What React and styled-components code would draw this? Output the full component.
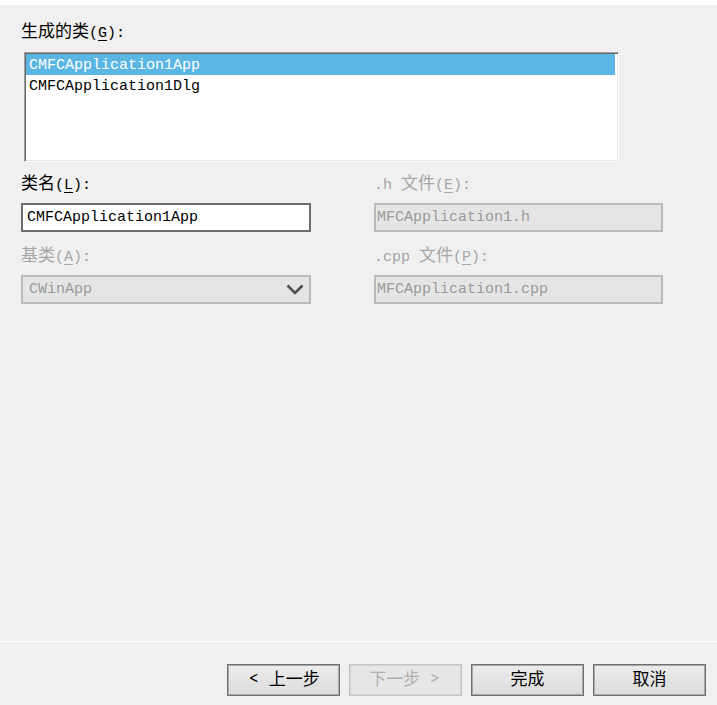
import React from "react";
import styled, { createGlobalStyle } from "styled-components";

const GlobalStyle = createGlobalStyle`
    html, body {
        margin: 0;
        padding: 0;
        background: #f0f0f0;
    }
    * {
        box-sizing: border-box;
    }
`;

const classes = ["CMFCApplication1App", "CMFCApplication1Dlg"];

function Caption({ prefix, text, hotkey, disabled }) {
    return (
        <Label disabled={disabled}>
            {prefix}
            <Han>{text}</Han>(<Key>{hotkey}</Key>):
        </Label>
    );
}

function Chevron() {
    return (
        <svg width="18" height="11" viewBox="0 0 18 11">
            <polyline points="1.5,1.5 9,9 16.5,1.5" fill="none" stroke="#505050" strokeWidth="2.6" />
        </svg>
    );
}

export default function App() {
    const [selected, setSelected] = React.useState(0);

    return (
        <>
            <GlobalStyle />
            <Page>
                <Content>
                    <Caption text="生成的类" hotkey="G" />
                    <ListBox>
                        {classes.map((name, i) => (
                            <ListItem key={name} selected={i === selected} onClick={() => setSelected(i)}>
                                {name}
                            </ListItem>
                        ))}
                    </ListBox>
                    <FieldGrid>
                        <Field>
                            <Caption text="类名" hotkey="L" />
                            <TextBox>CMFCApplication1App</TextBox>
                        </Field>
                        <Field>
                            <Caption prefix=".h " text="文件" hotkey="E" disabled />
                            <TextBox disabled>MFCApplication1.h</TextBox>
                        </Field>
                        <Field>
                            <Caption text="基类" hotkey="A" disabled />
                            <ComboBox>
                                <span>CWinApp</span>
                                <Chevron />
                            </ComboBox>
                        </Field>
                        <Field>
                            <Caption prefix=".cpp " text="文件" hotkey="P" disabled />
                            <TextBox disabled>MFCApplication1.cpp</TextBox>
                        </Field>
                    </FieldGrid>
                </Content>
                <Footer>
                    <Button><Arrow side="left">&lt;</Arrow>上一步</Button>
                    <Button disabled>下一步<Arrow side="right">&gt;</Arrow></Button>
                    <Button>完成</Button>
                    <Button>取消</Button>
                </Footer>
            </Page>
        </>
    );
}

const Page = styled.div`
    width: 717px;
    height: 705px;
    display: flex;
    flex-direction: column;
    background: #f0f0f0;
    border-top: 5px solid #ffffff;
`;

const Content = styled.div`
    display: flex;
    flex-direction: column;
    align-items: flex-start;
    padding: 17px 0 0 21px;
`;

const Label = styled.div`
    height: 22px;
    line-height: 16px;
    font: 400 15px "Liberation Mono", "Noto Sans CJK SC", monospace;
    line-height: 16px;
    color: ${p => (p.disabled ? "#a6a6a6" : "#000000")};
    white-space: pre;
`;

const Han = styled.span`
    font: 400 17px "Noto Sans CJK SC", sans-serif;
    line-height: 16px;
`;

const Key = styled.span`
    text-decoration: underline;
    text-underline-offset: 3px;
`;

const ListBox = styled.div`
    margin: 8px 0 0 3px;
    width: 595px;
    height: 110px;
    padding: 1px 3px 1px 1px;
    background: #ffffff;
    border-top: 1px solid #a0a0a0;
    border-left: 1px solid #a0a0a0;
    border-right: 1px solid #ffffff;
    border-bottom: 1px solid #ffffff;
    box-shadow: inset 1px 1px 0 #696969, inset -1px -1px 0 #e6e6e6;
`;

const ListItem = styled.div`
    height: 21px;
    padding: 2px 0 0 3px;
    line-height: 19px;
    font: 400 15px "Liberation Mono", monospace;
    line-height: 19px;
    color: ${p => (p.selected ? "#ffffff" : "#000000")};
    background: ${p => (p.selected ? "#5cb6e4" : "transparent")};
    cursor: default;
`;

const FieldGrid = styled.div`
    margin-top: 12px;
    display: grid;
    grid-template-columns: 290px 289px;
    column-gap: 63px;
    row-gap: 14px;
`;

const Field = styled.div`
    display: flex;
    flex-direction: column;
    gap: 7px;
`;

const TextBox = styled.div`
    height: 29px;
    display: flex;
    align-items: center;
    padding-left: ${p => (p.disabled ? "1px" : "4px")};
    font: 400 15px "Liberation Mono", monospace;
    color: ${p => (p.disabled ? "#9a9a9a" : "#000000")};
    background: ${p => (p.disabled ? "#e5e5e5" : "#ffffff")};
    border: 2px solid ${p => (p.disabled ? "#bababa" : "#6e6e6e")};
`;

const ComboBox = styled.div`
    height: 29px;
    display: flex;
    align-items: center;
    justify-content: space-between;
    padding: 0 5px 0 6px;
    font: 400 15px "Liberation Mono", monospace;
    color: #9a9a9a;
    background: #e5e5e5;
    border: 2px solid #bababa;
`;

const Footer = styled.div`
    margin-top: auto;
    display: flex;
    justify-content: flex-end;
    gap: 9px;
    padding: 22px 11px 9px 0;
    border-top: 1px solid #ffffff;
`;

const Button = styled.button`
    width: 113px;
    height: 32px;
    padding: 0 0 5px 0;
    display: flex;
    align-items: center;
    justify-content: center;
    font: 400 17px "Noto Sans CJK SC", sans-serif;
    color: ${p => (p.disabled ? "#b0b0b0" : "#000000")};
    background: ${p => (p.disabled ? "#e6e6e6" : "linear-gradient(#ececec, #dcdcdc)")};
    border: 1px solid ${p => (p.disabled ? "#c4c4c4" : "#6f6f6f")};
    box-shadow: inset 0 0 0 1px ${p => (p.disabled ? "#d4d4d4" : "#a8a8a8")};
    border-radius: 0;
`;

const Arrow = styled.span`
    font: 400 16px "DejaVu Sans", sans-serif;
    transform: scaleX(0.7);
    margin: ${p => (p.side === "left" ? "0 8px 0 0" : "0 0 0 8px")};
`;
